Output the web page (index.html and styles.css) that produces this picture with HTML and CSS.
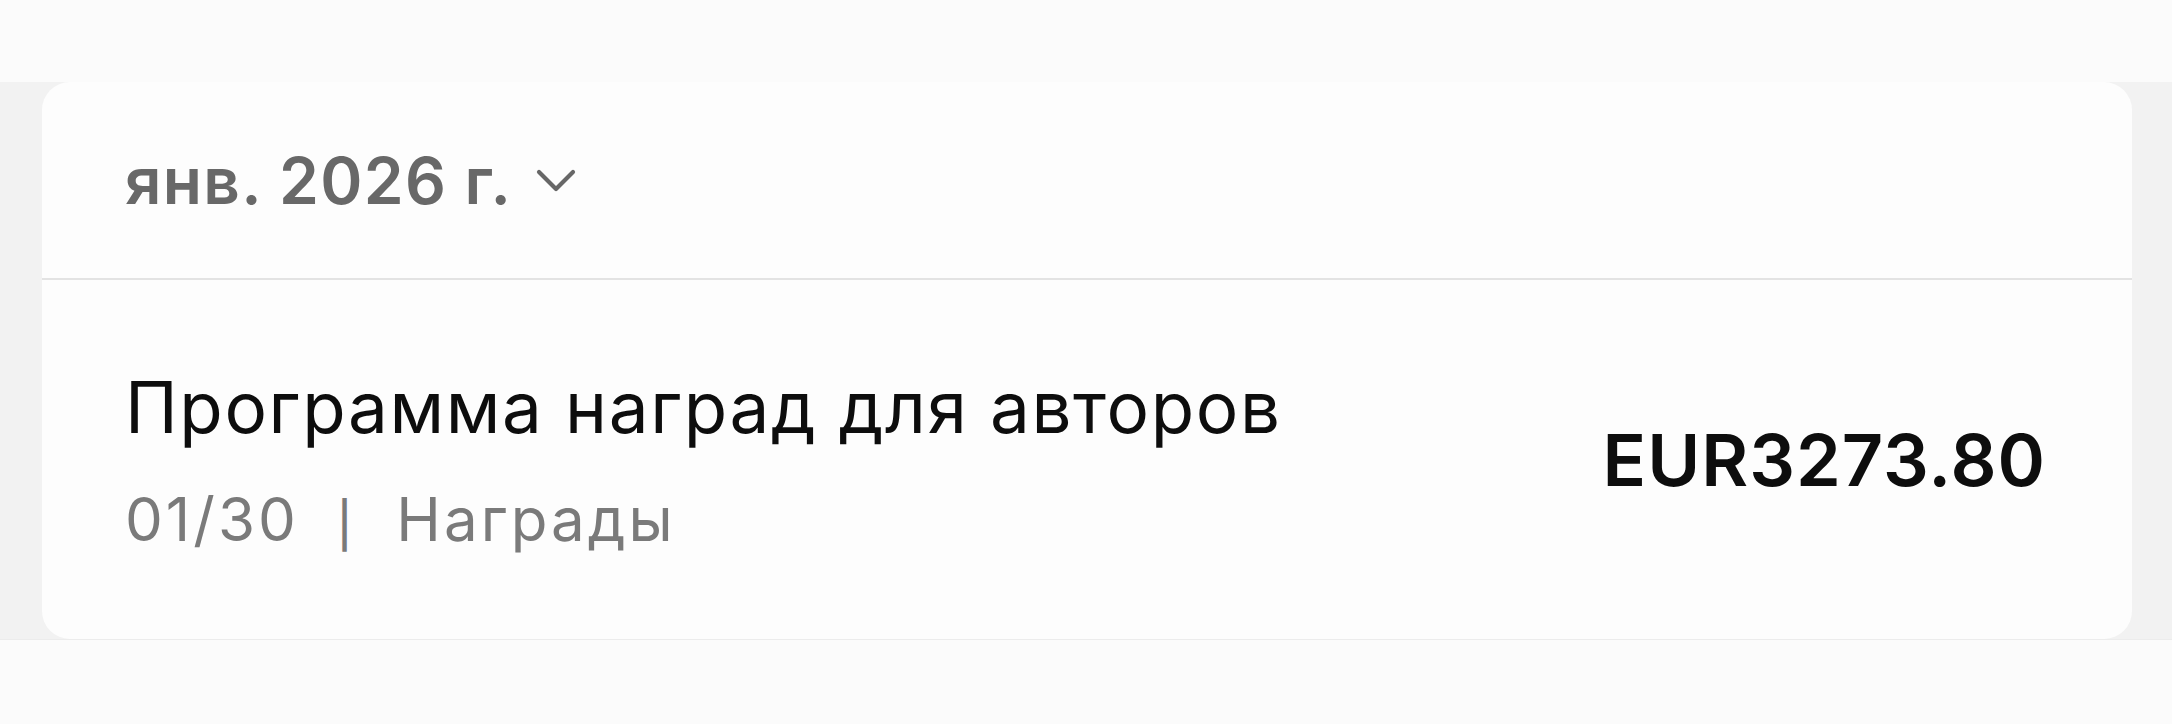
FILE: index.html
```html
<!DOCTYPE html>
<html lang="ru">
<head>
<meta charset="utf-8">
<link rel="stylesheet" href="styles.css">
</head>
<body>
<div class="top-space"></div>
<section class="band">
  <div class="card">
    <div class="card-head">
      <button class="month">
        <span class="month-label">янв. 2026 г.</span>
        <svg class="chev" viewBox="0 0 40 26" width="40" height="26" aria-hidden="true">
          <path d="M3 4 L20 21 L37 4" fill="none" stroke="#676767" stroke-width="4.2" stroke-linecap="round" stroke-linejoin="round"/>
        </svg>
      </button>
    </div>
    <div class="row">
      <div class="row-info">
        <div class="row-title">Программа наград для авторов</div>
        <div class="row-meta"><span>01/30</span><span class="sep">|</span><span>Награды</span></div>
      </div>
      <div class="row-amount">EUR3273.80</div>
    </div>
  </div>
</section>
</body>
</html>
```
FILE: styles.css
```css
html, body {
  margin: 0;
  padding: 0;
}
body {
  background: #fbfbfb;
  font-family: Inter, "Noto Sans", "Liberation Sans", sans-serif;
  width: 2172px;
  height: 724px;
  overflow: hidden;
}
.top-space {
  height: 82px;
}
.band {
  background: #f2f2f2;
  padding: 0 40px 0 42px;
  border-bottom: 1px solid #ececec;
}
.card {
  background: #fdfdfd;
  border-radius: 28px;
  overflow: hidden;
}
.card-head {
  height: 196px;
  display: flex;
  align-items: center;
  padding-left: 83px;
  border-bottom: 2px solid #e3e3e3;
}
.month {
  display: flex;
  align-items: center;
  gap: 24px;
  background: none;
  border: 0;
  padding: 0;
  margin-top: 0;
  font: inherit;
  cursor: pointer;
}
.month-label {
  font-size: 64px;
  font-weight: 600;
  color: #686868;
  letter-spacing: 1.3px;
}
.chev {
  display: block;
  margin-top: 2px;
}
.row {
  height: 359px;
  display: flex;
  align-items: center;
  justify-content: space-between;
  padding: 0 86px 0 83px;
}
.row-info {
  display: flex;
  flex-direction: column;
  gap: 36px;
  margin-top: 2px;
}
.row-title {
  font-size: 71px;
  font-weight: 400;
  color: #0d0d0d;
  line-height: 1.15;
  letter-spacing: 1.6px;
}
.row-meta {
  font-size: 60px;
  color: #7a7a7a;
  line-height: 1.15;
  display: flex;
  align-items: baseline;
  letter-spacing: 3px;
}
.sep {
  font-size: 45px;
  font-weight: 500;
  letter-spacing: 0;
  margin: 0 44px 0 38px;
}
.row-amount {
  font-size: 72px;
  font-weight: 600;
  color: #0d0d0d;
  letter-spacing: 1px;
}
```
